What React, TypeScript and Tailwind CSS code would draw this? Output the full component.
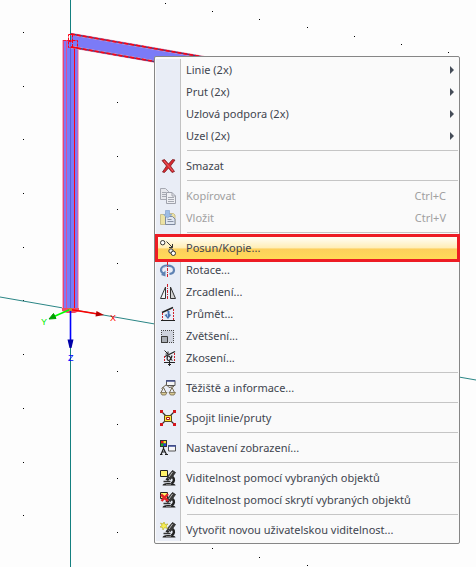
import { Fragment, ReactNode } from "react";

type Item = {
  label: string;
  icon?: ReactNode;
  shortcut?: string;
  submenu?: boolean;
  disabled?: boolean;
  active?: boolean;
};

function Icon({ children }: { children: ReactNode }) {
  return (
    <svg width="16" height="16" viewBox="0 0 16 16" fill="none" aria-hidden="true">
      {children}
    </svg>
  );
}

const deleteIcon = (
  <Icon>
    <path
      d="M2 2.5 4.5 1.5 8.5 6 12.5 1.5 15 2 10.5 8 14.5 13.5 12 14.5 8.5 10 4.5 14.5 2.5 14 6.5 8Z"
      fill="#d8282e"
      stroke="#7c2025"
      strokeWidth="0.8"
    />
    <path d="M4 3 13 13" stroke="#f4696c" strokeWidth="0.8" />
  </Icon>
);

const copyIcon = (
  <Icon>
    <path d="M.5.5h5l3 3v8h-8z" fill="#e6e7ec" stroke="#a6a9b2" />
    <path d="M2 4.5h4M2 6.5h4M2 8.5h4" stroke="#a6a9b2" />
    <path d="M6.5 4.5h5.5l3.5 3.5v7.5h-9z" fill="#eeeff3" stroke="#a0a3ad" />
    <path d="M12 4.5v3.5h3.5" stroke="#a0a3ad" />
    <path d="M8 9.5h6M8 11.5h6M8 13.5h6" stroke="#a6a9b2" />
  </Icon>
);

const pasteIcon = (
  <Icon>
    <path d="M.5 4.5h4l1-1h8l1.5 1.5v9.5H.5z" fill="#ece2a4" stroke="#c9bf8f" />
    <path d="M5.5 6.5h7l2.5 2.5v5.5H5.5z" fill="#dfe6f1" stroke="#7f8a9f" />
    <path d="M7.5 9.5h4M7.5 11.5h6" stroke="#8a93a4" />
    <path d="M5.5.5h4v4H12L7.5 8 3.5 4.5h2z" fill="#9dbce6" stroke="#85a3cf" strokeWidth="0.7" />
  </Icon>
);

const moveIcon = (
  <Icon>
    <g stroke="#333">
      <circle cx="2.7" cy="2.7" r="2.2" fill="#fff" />
      <path d="M6.5 1.5 12.5 7.5" />
      <path d="M12.5 4v3.5H9" />
      <circle cx="11" cy="11" r="2.2" fill="#eee" />
      <circle cx="13.3" cy="13.3" r="2.2" fill="#fff" />
    </g>
  </Icon>
);

const rotateIcon = (
  <Icon>
    <path
      d="M5 11.8C2.500 11.2 1 10 1 8c0-2.8 3-4.3 6.5-4.3S14 5.2 14 8c0 2.3-1.8 3.6-4.5 4"
      stroke="#5f82b3"
      strokeWidth="2.2"
    />
    <path d="M2 7.5C2.3 5.5 4.5 4.5 7.5 4.5" stroke="#b9cdea" strokeWidth="0.8" />
    <path d="M5.5 8.5v6L1 13z" fill="#5f82b3" />
    <path d="M7.5 0v16" stroke="#d0202a" strokeDasharray="3 1 1 1" />
  </Icon>
);

const mirrorIcon = (
  <Icon>
    <path d="M5.5 3v11.5h-5z" fill="#f4f5f8" stroke="#333" />
    <path d="M10.500 3v11.5h5z" fill="#d4d4d4" stroke="#333" />
    <path d="M7.5 0v16" stroke="#d0202a" strokeDasharray="3 1 1 1" />
  </Icon>
);

const projectIcon = (
  <Icon>
    <path d="M1 14.5h14" stroke="#222" />
    <path d="M2 6.5 13 1.5" stroke="#222" strokeWidth="1.4" />
    <path d="M2.5 7v7M13.5 3v11" stroke="#d0202a" strokeDasharray="2 1" />
    <path d="M7 5h2.5v3l1.500 1-3 4-3.500-4L7 8z" fill="#466fae" />
    <path d="M7.5 5.5v5" stroke="#a8c3ea" />
  </Icon>
);

const scaleIcon = (
  <Icon>
    <path d="M1.5 2.5h12v12h-12z" fill="#cfd3de" />
    <path d="M1 2.5h13M1 14.5h13M1.5 2v13M13.5 2v13" stroke="#444" strokeDasharray="1 1" />
    <path d="M1.5 8.5h6v6h-6z" fill="#a9adb4" stroke="#3c3c3c" />
  </Icon>
);

const skewIcon = (
  <Icon>
    <path d="M5 6.5 15 1.5" stroke="#222" strokeWidth="1.3" />
    <path d="M4.5.5 8 4M8 1.5V4H5.5" stroke="#222" />
    <path d="M4.5 6v6M14.5 3v9" stroke="#d0202a" strokeDasharray="2 1" />
    <path
      d="M12 5.5c-.8 3.5-2 5-3.4 5-2 0-2-4.5.2-4.5 1.7 0 1.7 4.5 3.7 4.5"
      stroke="#222"
      strokeWidth="1.2"
    />
    <path d="M4 12.5h11M9.5 11v5M8 14.5h3" stroke="#222" />
  </Icon>
);

const balanceIcon = (
  <Icon>
    <path d="M6.5.5h8.5v5H6.5z" fill="#f5f5f5" stroke="#555" />
    <path d="M6 1h9" stroke="#44508e" strokeWidth="1.5" />
    <path d="M1.5 8.5 6.5 4.5 9 7.5 14 6.5" stroke="#6b6049" />
    <path d="M3.5 7.5 1 12.5M3.5 7.5 6 12.5M12 7.5l-2.5 5M12 7.5l2.5 5" stroke="#756a50" />
    <path
      d="M.5 12.5h6.5L5.5 15H2zM9 12.5h6.5L14 15h-3.5z"
      fill="#d8c990"
      stroke="#756a50"
      strokeWidth="0.8"
    />
  </Icon>
);

const joinIcon = (
  <Icon>
    <path d="M1 1l14 14M15 1 1 15" stroke="#333" strokeWidth="1.2" />
    <path d="M0 0h3v3H0zM13 0h3v3h-3zM0 13h3v3H0zM13 13h3v3h-3z" fill="#d4151b" />
    <path d="M4.5 5.5h7v6h-7z" fill="#ffe838" stroke="#5c4b1c" />
    <path d="M6.5 7.5h3v2h-3z" fill="#fff" stroke="#a81616" />
  </Icon>
);

const displayIcon = (
  <Icon>
    <path d="M0 0h7v7H0z" fill="#333" />
    <path d="M1 1h2.5v2.5H1z" fill="#f01818" />
    <path d="M3.5 1H6v2.5H3.5z" fill="#f7e520" />
    <path d="M1 3.5h2.5V6H1z" fill="#14b42a" />
    <path d="M3.5 3.5H6V6H3.500z" fill="#2244e0" />
    <path
      d="M3.5 7v2M3.5 8.5 1 14.5M3.5 8.5 6.5 14.5M2 12h3.5M0 14.5h2.5M5 14.5h3"
      stroke="#222"
      strokeWidth="1.2"
    />
    <path d="M8.5 5.5h7v5.5h-7z" fill="#f6f6f8" stroke="#555" />
    <path d="M8 6h8" stroke="#3a4a98" strokeWidth="1.5" />
  </Icon>
);

function Microscope() {
  return (
    <>
      <path d="M12.5.5 15.5 2.5 10.5 9.5 7 7Z" fill="#3a3a3a" stroke="#222" strokeWidth="0.8" />
      <path d="M12.500 2 9 7" stroke="#b8b8b8" />
      <path d="M7 7.5 9.500 9.5l-1.5 1.5-2.500-1.500z" fill="#222" />
      <path d="M12.5 7c2.500 2 1.500 5-1 6.500" stroke="#222" strokeWidth="2.5" />
      <path d="M3.5 11.5h7" stroke="#333" strokeWidth="1.5" />
      <path d="M2.500 15.5c0-1.5 2-2.5 5-2.500 5 0 8 1 8 2.500z" fill="#222" />
      <path d="M6 14.5h5" stroke="#8f8f8f" strokeWidth="0.8" />
    </>
  );
}

const showSelectedIcon = (
  <Icon>
    <path d="M.5.5h7v6h-7z" fill="#fff26b" stroke="#222" />
    <Microscope />
  </Icon>
);

const hideSelectedIcon = (
  <Icon>
    <path d="M.5.5h7v6h-7z" fill="#fff26b" stroke="#222" />
    <Microscope />
    <path d="M1 2.5 8 9M8 2 1.5 9" stroke="#e0252b" strokeWidth="2.5" />
  </Icon>
);

const newVisibilityIcon = (
  <Icon>
    <Microscope />
    <path
      d="M4 0 5 2.5 8 2 6 4 7.5 6.5 4.5 5.5 3 8 2.5 5.5 0 5 2 3.5.5 1 3 2z"
      fill="#f8ee50"
      stroke="#b8b030"
      strokeWidth="0.7"
    />
  </Icon>
);

const groups: Item[][] = [
  [
    { label: "Linie (2x)", submenu: true },
    { label: "Prut (2x)", submenu: true },
    { label: "Uzlová podpora (2x)", submenu: true },
    { label: "Uzel (2x)", submenu: true },
  ],
  [{ label: "Smazat", icon: deleteIcon }],
  [
    { label: "Kopírovat", icon: copyIcon, shortcut: "Ctrl+C", disabled: true },
    { label: "Vložit", icon: pasteIcon, shortcut: "Ctrl+V", disabled: true },
  ],
  [
    { label: "Posun/Kopie...", icon: moveIcon, active: true },
    { label: "Rotace...", icon: rotateIcon },
    { label: "Zrcadlení...", icon: mirrorIcon },
    { label: "Průmět...", icon: projectIcon },
    { label: "Zvětšení...", icon: scaleIcon },
    { label: "Zkosení...", icon: skewIcon },
  ],
  [{ label: "Těžiště a informace...", icon: balanceIcon }],
  [{ label: "Spojit linie/pruty", icon: joinIcon }],
  [{ label: "Nastavení zobrazení...", icon: displayIcon }],
  [
    { label: "Viditelnost pomocí vybraných objektů", icon: showSelectedIcon },
    { label: "Viditelnost pomocí skrytí vybraných objektů", icon: hideSelectedIcon },
  ],
  [{ label: "Vytvořit novou uživatelskou viditelnost...", icon: newVisibilityIcon }],
];

const gridPoints = [
  [23, 32], [23, 86], [23, 139], [23, 193], [23, 247], [23, 300],
  [23, 354], [23, 408], [23, 462], [23, 515],
  [117, 102], [117, 156], [117, 209], [117, 263], [117, 317],
  [117, 371], [117, 424], [117, 478], [117, 532],
  [165, 3], [212, 11], [259, 19], [307, 27], [354, 36], [401, 44], [448, 52],
  [212, 548], [259, 557], [307, 565],
];

function Model() {
  return (
    <svg
      width="476"
      height="567"
      viewBox="0 0 476 567"
      fill="none"
      className="absolute top-0 left-0"
      aria-hidden="true"
    >
      {gridPoints.map(([x, y]) => (
        <rect key={`${x}-${y}`} x={x} y={y} width="1" height="1" fill="#000" />
      ))}
      <path d="M70.5 0v567" stroke="#148080" />
      <path d="M0 297 476 380" stroke="#2a8585" />

      {/* column */}
      <path d="M63 40h15v270H63z" fill="#7b7bf7" />
      <path d="M70.5 41v268" stroke="#6060d8" />
      <path d="M62.5 40v270M78.5 40v270" stroke="#f9b0c0" />
      <path d="M63.5 40v270" stroke="#e8437f" />
      <path d="M66.5 40v270" stroke="#e04c98" />
      <path d="M77.5 40v270" stroke="#b468c8" />
      <path d="M74.5 42v267" stroke="#ff0014" />
      <path d="M63 40.5h15" stroke="#f0203c" strokeDasharray="3 1" />

      {/* beam */}
      <path d="M71 34 206 57.5V70L71 47z" fill="#7b7bf7" />
      <path d="M71 34 206 57.5M71 47 206 70.5" stroke="#f59ab0" strokeWidth="2.5" />
      <path d="M71 34 206 57.5M71 47 206 70.5" stroke="#4a3a80" strokeWidth="1.5" />
      <path
        d="M71 34 206 57.5M71 47 206 70.5"
        stroke="#ff0014"
        strokeWidth="1.5"
        strokeDasharray="4 2"
      />
      <path
        d="M68.5 34.5h4v7h-4zM68.5 40.5h9v7h-9zM72.5 40v8"
        stroke="#ff0014"
        strokeDasharray="3 1"
      />

      {/* axes at the base node */}
      <path d="M62 308h17v3l-4 2h-8l-5-2z" fill="#f04a64" />
      <path d="M70.5 310v30" stroke="#0000ff" strokeWidth="1.6" />
      <path d="M67.5 339.5h6l-2 8.5h-2z" fill="#0000a8" />
      <path d="M70 309.5 98 314" stroke="#ff0000" strokeWidth="1.6" />
      <path d="M96.5 311 104 315l-8.5 1.5z" fill="#b80000" />
      <path d="M70 309.5 54 316.5" stroke="#00ff00" strokeWidth="1.6" />
      <path d="M53.5 313.5 49 319l7-.5z" fill="#00a000" stroke="#00a000" />
      <path d="M69 308h3v3h-3z" fill="#c08a30" />
      <g fontFamily="Liberation Sans" fontSize="9">
        <text x="110" y="321" fill="#ff0000">X</text>
        <text x="41" y="325" fill="#00ee00">Y</text>
        <text x="68" y="361" fill="#0000ff">Z</text>
      </g>
    </svg>
  );
}

function MenuRow({ item }: { item: Item }) {
  return (
    <li role="none" className="relative">
      <button
        type="button"
        role="menuitem"
        disabled={item.disabled}
        aria-haspopup={item.submenu ? "menu" : undefined}
        className={`flex h-[22px] w-full items-center text-left text-[#3f454f] disabled:text-[#a0a0a0] ${
          item.active
            ? "bg-linear-[to_bottom,#fffef6_0%,#ffedb4_50%,#fdcf5c_54%,#ffda58_100%]"
            : ""
        }`}
      >
        <span
          className={`flex h-full w-[25px] shrink-0 items-center justify-center border-r ${
            item.active ? "border-transparent" : "border-[#c2c2c2] bg-[#e9edf6]"
          }`}
        >
          {item.icon}
        </span>
        <span className="flex-1 pl-[5px] whitespace-nowrap">{item.label}</span>
        {item.shortcut && <span className="pr-3">{item.shortcut}</span>}
        {item.submenu && (
          <svg width="4" height="8" viewBox="0 0 4 8" className="mr-1" aria-hidden="true">
            <path d="M0 0 4 4 0 8z" fill="#454c58" />
          </svg>
        )}
      </button>
      {item.active && (
        <span className="pointer-events-none absolute -top-[3px] -right-[2px] -bottom-[3px] -left-px z-10 border-3 border-[#ed1c24]" />
      )}
    </li>
  );
}

export default function App() {
  return (
    <main className="relative min-h-screen w-full overflow-hidden bg-[#fdfdfd]">
      <Model />
      <ul
        role="menu"
        className="absolute top-[56px] left-[154px] w-[306px] rounded-xs border border-[#868686] bg-[#fafafa] px-px py-[2px] font-['Noto_Sans','Open_Sans',sans-serif] text-[11px]"
      >
        {groups.map((items, i) => (
          <Fragment key={items[0].label}>
            {i > 0 && (
              <li role="separator" className="flex h-2">
                <span className="w-[25px] border-r border-[#c2c2c2] bg-[#e9edf6]" />
                <span className="mt-[3px] ml-[6px] h-px flex-1 bg-[#c5c5c5]" />
              </li>
            )}
            {items.map((item) => (
              <MenuRow key={item.label} item={item} />
            ))}
          </Fragment>
        ))}
      </ul>
    </main>
  );
}
